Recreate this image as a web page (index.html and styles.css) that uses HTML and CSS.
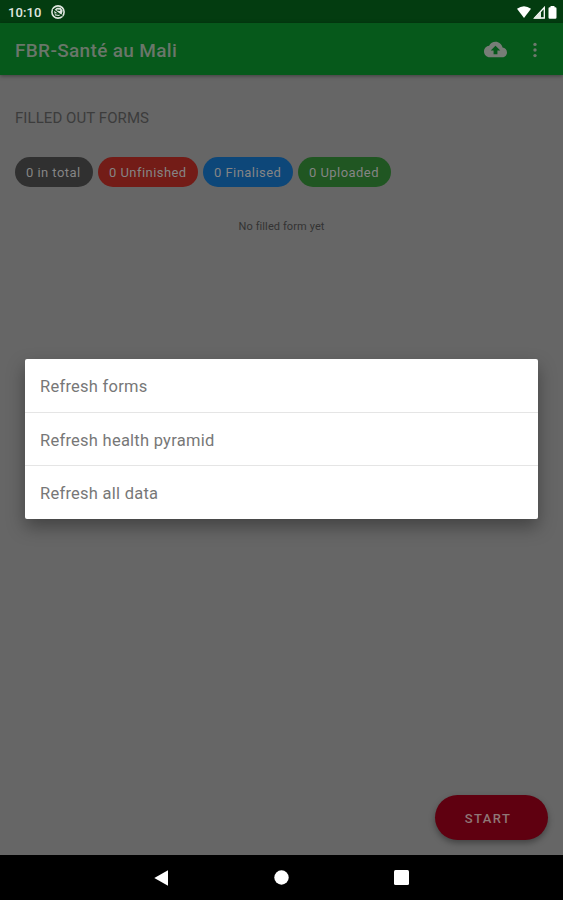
FILE: index.html
```html
<!DOCTYPE html>
<html lang="en">
    <head>
        <meta charset="utf-8">
        <title>FBR-Santé au Mali</title>
        <link rel="stylesheet" href="styles.css">
    </head>
    <body>
        <div class="screen">
            <div class="status">
                <span class="time">10:10</span>
                <svg class="badge" width="14" height="14" viewBox="0 0 14 14">
                    <circle cx="7" cy="7" r="6.1" fill="none" stroke="#dfe6df" stroke-width="1.6"/>
                    <path d="M3 5.5l2.8-2.7h3.9l2 3-1 3.4-3 1.8-3.6-.6z" fill="#dfe6df"/>
                    <path d="M2 4.2l9.5 7M5.8 5l3.4.4M4.4 8.6l3.4.8" fill="none" stroke="#033c10" stroke-width="1.1"/>
                </svg>
                <div class="signals">
                    <svg width="14" height="12" viewBox="0 0 14 12"><path d="M0 2.8Q7-2.4 14 2.8L7 12z" fill="#fff"/></svg>
                    <svg width="13" height="13" viewBox="0 0 13 13"><path d="M1.6 12L11.3 1.5V12z" fill="none" stroke="#fff" stroke-width="1.3"/><path d="M1 12.5L8 5.3v7.2z" fill="#e6ece6"/></svg>
                    <svg width="9" height="13" viewBox="0 0 9 13"><path d="M2.5 0h4v1.2h.8q1.2 0 1.2 1.2v9.1q0 1.3-1.2 1.3H1.7Q.5 12.8.5 11.5V2.4q0-1.2 1.2-1.2h.8z" fill="#fff"/></svg>
                </div>
            </div>
            <div class="toolbar">
                <h1 class="title">FBR-Santé au Mali</h1>
                <svg class="upload" width="23" height="23" viewBox="0 0 24 24"><path d="M19.35 10.04C18.67 6.59 15.64 4 12 4 9.11 4 6.6 5.64 5.35 8.04 2.34 8.36 0 10.91 0 14c0 3.31 2.69 6 6 6h13c2.76 0 5-2.24 5-5 0-2.64-2.05-4.78-4.65-4.96zM14 13v4h-4v-4H7l5-5 5 5h-3z" fill="#777d77"/></svg>
                <svg class="more" width="6" height="18" viewBox="0 0 6 18"><g fill="#6d786d"><circle cx="3" cy="3.4" r="1.7"/><circle cx="3" cy="9" r="1.7"/><circle cx="3" cy="14.6" r="1.7"/></g></svg>
            </div>
            <div class="content">
                <h2 class="heading">FILLED OUT FORMS</h2>
                <div class="chips">
                    <div class="chip total">0 in total</div>
                    <div class="chip unfinished">0 Unfinished</div>
                    <div class="chip finalised">0 Finalised</div>
                    <div class="chip uploaded">0 Uploaded</div>
                </div>
                <p class="none">No filled form yet</p>
                <div class="start">START</div>
            </div>
            <div class="nav">
                <svg width="15" height="16" viewBox="0 0 15 16"><path d="M.3 8L14 .3v15.4z" fill="#fff"/></svg>
                <svg width="15" height="15" viewBox="0 0 15 15"><circle cx="7.5" cy="7.5" r="7.2" fill="#fff"/></svg>
                <svg width="15" height="15" viewBox="0 0 15 15"><rect width="15" height="15" rx="1.5" fill="#fff"/></svg>
            </div>
            <!-- refresh menu -->
            <div class="dialog">
                <div class="item">Refresh forms</div>
                <div class="item">Refresh health pyramid</div>
                <div class="item">Refresh all data</div>
            </div>
        </div>
    </body>
</html>
```

FILE: styles.css
```css
body{
    margin: 0px;
    background-color: #666;
    font-family: Roboto, "Liberation Sans", sans-serif;
}
svg{
    display: block;
    flex: none;
}
h1, h2, p{
    margin: 0px;
    font-weight: normal;
    white-space: nowrap;
}
.screen{
    position: relative;
    display: flex;
    flex-direction: column;
    width: 563px;
    height: 900px;
    overflow: hidden;
}
.status{
    display: flex;
    align-items: center;
    box-sizing: border-box;
    height: 23px;
    padding: 1px 6px 0 8px;
    background-color: #033c10;
}
    .time{
        width: 43px;
        color: #e0e8e0;
        font-size: 13px;
        font-weight: 500;
        letter-spacing: 0.1px;
    }
    .signals{
        display: flex;
        align-items: center;
        gap: 2px;
        margin-left: auto;
    }
.toolbar{
    position: relative;
    display: flex;
    align-items: center;
    box-sizing: border-box;
    height: 52px;
    padding: 1px 25px 0 15px;
    background-color: #06591b;
    box-shadow: 0 1px 4px rgba(0,0,0,0.4);
}
    .title{
        flex: 1;
        padding-top: 1px;
        color: #6a766a;
        font-size: 19px;
        font-weight: 500;
        letter-spacing: 0.33px;
    }
    .more{
        margin-left: 25px;
    }
.content{
    display: flex;
    flex: 1;
    flex-direction: column;
    padding: 34px 15px 15px;
}
    .heading{
        color: #3c3c3c;
        font-size: 15px;
        line-height: 19px;
        letter-spacing: 0.07px;
    }
    .chips{
        display: flex;
        gap: 5px;
        margin-top: 29px;
    }
    .chip{
        box-sizing: border-box;
        height: 30px;
        padding-left: 11px;
        border-radius: 15px;
        color: #858585;
        font-size: 13px;
        line-height: 31px;
        letter-spacing: 0.45px;
        white-space: nowrap;
    }
    .total{
        width: 78px;
        background-color: #303030;
    }
    .unfinished{
        width: 100px;
        background-color: #731c17;
    }
    .finalised{
        width: 90px;
        background-color: #0d4779;
    }
    .uploaded{
        width: 93px;
        background-color: #205622;
    }
    .none{
        margin-top: 32px;
        color: #333;
        font-size: 11px;
        line-height: 15px;
        letter-spacing: 0.1px;
        text-align: center;
    }
    .start{
        align-self: flex-end;
        box-sizing: border-box;
        width: 113px;
        height: 45px;
        margin-top: auto;
        padding-right: 7px;
        border-radius: 23px;
        background-color: #5f0010;
        box-shadow: 0 3px 6px rgba(0,0,0,0.35);
        color: #8f7777;
        font-size: 13px;
        font-weight: 500;
        line-height: 47px;
        letter-spacing: 1.4px;
        text-align: center;
    }
.nav{
    display: flex;
    align-items: center;
    justify-content: center;
    gap: 105px;
    height: 45px;
    background-color: #000;
}
.dialog{
    position: absolute;
    top: 359px;
    left: 25px;
    width: 513px;
    border-radius: 2px;
    background-color: #fff;
    box-shadow: 0 8px 18px rgba(0,0,0,0.35);
}
    .item{
        box-sizing: border-box;
        height: 53px;
        padding-left: 15px;
        color: #777;
        font-size: 16.5px;
        line-height: 55px;
        letter-spacing: 0.25px;
    }
    .item + .item{
        border-top: 1px solid #e5e5e5;
    }
    .item:last-child{
        height: 54px;
    }
```
